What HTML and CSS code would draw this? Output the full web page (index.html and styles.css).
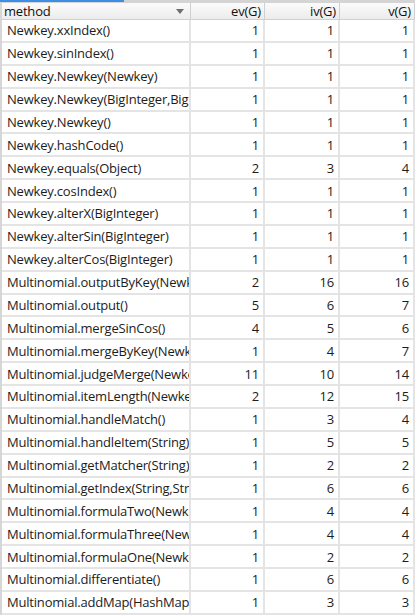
FILE: index.html
```html
<!DOCTYPE html>
<html>
<head>
<meta charset="utf-8">
<link rel="stylesheet" href="styles.css">
</head>
<body>
<div class="topbar"><div class="tab-active"></div></div>
<div class="table">
  <div class="hcell hmethod"><span>method</span><span class="arrow"></span></div>
  <div class="hcell num">ev(G)</div>
  <div class="hcell num">iv(G)</div>
  <div class="hcell num">v(G)</div>

  <div class="cell">Newkey.xxIndex()</div><div class="cell num">1</div><div class="cell num">1</div><div class="cell num">1</div>
  <div class="cell">Newkey.sinIndex()</div><div class="cell num">1</div><div class="cell num">1</div><div class="cell num">1</div>
  <div class="cell">Newkey.Newkey(Newkey)</div><div class="cell num">1</div><div class="cell num">1</div><div class="cell num">1</div>
  <div class="cell">Newkey.Newkey(BigInteger,BigInteger)</div><div class="cell num">1</div><div class="cell num">1</div><div class="cell num">1</div>
  <div class="cell">Newkey.Newkey()</div><div class="cell num">1</div><div class="cell num">1</div><div class="cell num">1</div>
  <div class="cell">Newkey.hashCode()</div><div class="cell num">1</div><div class="cell num">1</div><div class="cell num">1</div>
  <div class="cell">Newkey.equals(Object)</div><div class="cell num">2</div><div class="cell num">3</div><div class="cell num">4</div>
  <div class="cell">Newkey.cosIndex()</div><div class="cell num">1</div><div class="cell num">1</div><div class="cell num">1</div>
  <div class="cell">Newkey.alterX(BigInteger)</div><div class="cell num">1</div><div class="cell num">1</div><div class="cell num">1</div>
  <div class="cell">Newkey.alterSin(BigInteger)</div><div class="cell num">1</div><div class="cell num">1</div><div class="cell num">1</div>
  <div class="cell">Newkey.alterCos(BigInteger)</div><div class="cell num">1</div><div class="cell num">1</div><div class="cell num">1</div>
  <div class="cell">Multinomial.outputByKey(Newkey)</div><div class="cell num">2</div><div class="cell num">16</div><div class="cell num">16</div>
  <div class="cell">Multinomial.output()</div><div class="cell num">5</div><div class="cell num">6</div><div class="cell num">7</div>
  <div class="cell">Multinomial.mergeSinCos()</div><div class="cell num">4</div><div class="cell num">5</div><div class="cell num">6</div>
  <div class="cell">Multinomial.mergeByKey(Newkey)</div><div class="cell num">1</div><div class="cell num">4</div><div class="cell num">7</div>
  <div class="cell">Multinomial.judgeMerge(Newkey)</div><div class="cell num">11</div><div class="cell num">10</div><div class="cell num">14</div>
  <div class="cell">Multinomial.itemLength(Newkey)</div><div class="cell num">2</div><div class="cell num">12</div><div class="cell num">15</div>
  <div class="cell">Multinomial.handleMatch()</div><div class="cell num">1</div><div class="cell num">3</div><div class="cell num">4</div>
  <div class="cell">Multinomial.handleItem(String)</div><div class="cell num">1</div><div class="cell num">5</div><div class="cell num">5</div>
  <div class="cell">Multinomial.getMatcher(String)</div><div class="cell num">1</div><div class="cell num">2</div><div class="cell num">2</div>
  <div class="cell">Multinomial.getIndex(String,String)</div><div class="cell num">1</div><div class="cell num">6</div><div class="cell num">6</div>
  <div class="cell">Multinomial.formulaTwo(Newkey)</div><div class="cell num">1</div><div class="cell num">4</div><div class="cell num">4</div>
  <div class="cell">Multinomial.formulaThree(Newkey)</div><div class="cell num">1</div><div class="cell num">4</div><div class="cell num">4</div>
  <div class="cell">Multinomial.formulaOne(Newkey)</div><div class="cell num">1</div><div class="cell num">2</div><div class="cell num">2</div>
  <div class="cell">Multinomial.differentiate()</div><div class="cell num">1</div><div class="cell num">6</div><div class="cell num">6</div>
  <div class="cell">Multinomial.addMap(HashMap)</div><div class="cell num">1</div><div class="cell num">3</div><div class="cell num">3</div>
</div>
</body>
</html>
```

FILE: styles.css
```css
html, body {
  margin: 0;
  padding: 0;
  background: #ffffff;
  width: 415px;
  height: 615px;
  overflow: hidden;
}
body {
  font-family: "Open Sans", "Noto Sans", sans-serif;
  font-size: 13px;
  letter-spacing: -0.2px;
  color: #1c1c1c;
}
.topbar {
  height: 3px;
  background: #d4d4d4;
  display: flex;
}
.tab-active {
  width: 124px;
  height: 2px;
  background: #3d8fe6;
}
.table {
  display: grid;
  grid-template-columns: 189px 74px 75px 75px;
  grid-template-rows: 17px;
  grid-auto-rows: 22.88px;
  border-left: 2px solid #d6d6d6;
  width: 413px;
}
.table > .hcell {
  height: 16px;
  line-height: 16px;
  background: linear-gradient(#fbfbfb, #ececec);
  border-bottom: 1px solid #d0d0d0;
  border-right: 1px solid #cfcfcf;
  padding: 0 3px 0 2px;
  color: #111;
  white-space: nowrap;
  overflow: hidden;
}
.hmethod {
  display: flex;
  justify-content: space-between;
  align-items: center;
}
.arrow {
  width: 0;
  height: 0;
  border-left: 4px solid transparent;
  border-right: 4px solid transparent;
  border-top: 5px solid #6e6e6e;
  margin-right: 3px;
}
.cell {
  box-sizing: border-box;
  border-right: 2px solid #e4e4e4;
  border-bottom: 2px solid #e4e4e4;
  padding: 0 3px 0 5px;
  display: flex;
  align-items: center;
  white-space: nowrap;
  overflow: hidden;
}
.num {
  justify-content: flex-end;
  text-align: right;
  padding-right: 4px;
}
.hcell.num { display: block; }
```
